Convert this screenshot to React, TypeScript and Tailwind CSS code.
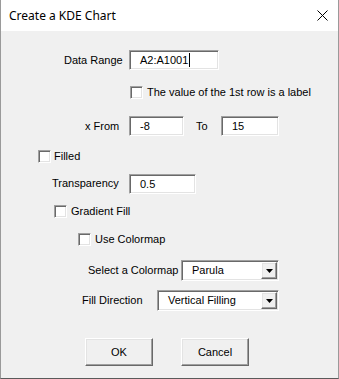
import React from "react";

const sunken =
  "border border-t-[#a0a0a0] border-l-[#a0a0a0] border-r-white border-b-white shadow-[inset_1px_1px_0_#696969,inset_-1px_-1px_0_#e3e3e3] bg-white";
const raised =
  "border border-t-white border-l-white border-r-[#696969] border-b-[#696969] shadow-[inset_-1px_-1px_0_#a0a0a0,inset_1px_1px_0_#e3e3e3] bg-[#f0f0f0]";

function Checkbox({ label, gap = "ml-[4px]" }: { label: string; gap?: string }) {
  return (
    <div className="flex items-center h-[13px]">
      <div className={`w-[13px] h-[13px] shrink-0 ${sunken}`} />
      <span className={`${gap} leading-none whitespace-nowrap`}>{label}</span>
    </div>
  );
}

function Input({ w, value, cursor }: { w: string; value: string; cursor?: boolean }) {
  return (
    <div className={`${w} h-[20px] flex items-center pl-[10px] ${sunken}`}>
      <span className="leading-none">{value}</span>
      {cursor && <span className="w-px h-[14px] bg-black ml-[1px]" />}
    </div>
  );
}

function Select({ w, value }: { w: string; value: string }) {
  return (
    <div className={`${w} h-[21px] flex items-center pl-[10px] pr-[1px] ${sunken}`}>
      <span className="flex-1 leading-none whitespace-nowrap">{value}</span>
      <div className={`w-[16px] h-[17px] flex items-center justify-center ${raised}`}>
        <svg width="7" height="4" viewBox="0 0 7 4">
          <path d="M0 0H7L3.5 4Z" fill="#000" />
        </svg>
      </div>
    </div>
  );
}

export default function App() {
  return (
    <div className="w-[339px] h-[379px] bg-[#f0f0f0] flex flex-col border-l border-r border-b border-l-[#9a9a9a] border-r-[#9a9a9a] border-b-[#5a5a5a] font-['Liberation_Sans',Arial,sans-serif] text-[11px] text-black">
      <div className="h-[31px] bg-white flex items-center pl-[8px] pr-[10px] shrink-0">
        <span className="flex-1 font-['Noto_Sans',sans-serif] text-[12px] leading-none">
          Create a KDE Chart
        </span>
        <svg width="11" height="11" viewBox="0 0 11 11">
          <path d="M0.5 0.5L10.5 10.5M10.5 0.5L0.5 10.5" stroke="#000" strokeWidth="1" />
        </svg>
      </div>

      <div className="mt-[19px] h-[20px] flex items-center pl-[63px]">
        <span className="w-[65px]">Data Range</span>
        <Input w="w-[90px]" value="A2:A1001" cursor />
      </div>

      <div className="mt-[16px] pl-[129px]">
        <Checkbox label="The value of the 1st row is a label" />
      </div>

      <div className="mt-[17px] h-[20px] flex items-center pl-[84px]">
        <span className="w-[44px]">x From</span>
        <Input w="w-[55px]" value="-8" />
        <span className="ml-[12px] w-[25px]">To</span>
        <Input w="w-[58px]" value="15" />
      </div>

      <div className="mt-[14px] pl-[37px]">
        <Checkbox label="Filled" gap="ml-[3px]" />
      </div>

      <div className="mt-[11px] h-[20px] flex items-center pl-[51px]">
        <span className="w-[77px] -mt-[2px]">Transparency</span>
        <Input w="w-[67px]" value="0.5" />
      </div>

      <div className="mt-[11px] pl-[53px]">
        <Checkbox label="Gradient Fill" />
      </div>

      <div className="mt-[15px] pl-[77px]">
        <Checkbox label="Use Colormap" />
      </div>

      <div className="mt-[14px] h-[21px] flex items-center pl-[87px]">
        <span className="w-[93px]">Select a Colormap</span>
        <Select w="w-[98px]" value="Parula" />
      </div>

      <div className="mt-[9px] h-[21px] flex items-center pl-[81px]">
        <span className="w-[75px]">Fill Direction</span>
        <Select w="w-[122px]" value="Vertical Filling" />
      </div>

      <div className="mt-[27px] flex pl-[84px]">
        <button className={`w-[68px] h-[28px] ${raised} flex items-center justify-center`}>OK</button>
        <button className={`ml-[28px] w-[68px] h-[28px] ${raised} flex items-center justify-center`}>
          Cancel
        </button>
      </div>
    </div>
  );
}
